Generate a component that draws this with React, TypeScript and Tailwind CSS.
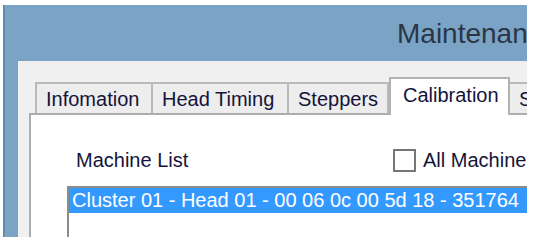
import React from "react";

const font = { fontFamily: '"Liberation Sans", Arial, sans-serif' };

function Tab({ label, w, selected }: { label: string; w: number; selected?: boolean }) {
  if (selected) {
    return (
      <div
        style={{ width: w }}
        className="relative z-10 -mb-[2px] h-[38px] shrink-0 border-2 border-b-0 border-[#b2b2b2] bg-white pl-[12px] pt-[4px] text-[20px] leading-[24px] text-[#14143a]"
      >
        {label}
      </div>
    );
  }
  return (
    <div
      style={{ width: w }}
      className="h-[31px] shrink-0 border-2 border-b-0 border-l-0 border-[#b9b9b9] bg-[#ededed] pl-[9px] pt-[3px] text-[20px] leading-[24px] text-[#14143a] first:border-l-2"
    >
      {label}
    </div>
  );
}

export default function App() {
  return (
    <div className="h-[246px] w-[534px] overflow-hidden bg-white pl-[3px] pt-[5px]" style={font}>
      <div className="flex h-[232px] w-[524px] flex-col overflow-hidden border-l-2 border-[#6489aa] bg-[#7ba3c5]">
        <div className="h-[56px] shrink-0 whitespace-nowrap pl-[392px] pt-[13px] text-[28px] leading-[32px] text-[#2a3646]">
          Maintenance
        </div>
        <div className="flex flex-1">
          <div className="w-[13px] shrink-0" />
          <div className="flex flex-1 flex-col bg-[#f0f0f0] pl-[11px] pt-[16px]">
            <div className="flex h-[36px] shrink-0 items-end pl-[6px]">
              <Tab label="Infomation" w={118} />
              <Tab label="Head Timing" w={136} />
              <Tab label="Steppers" w={100} />
              <Tab label="Calibration" w={121} selected />
              <Tab label="Settings" w={100} />
            </div>
            <div className="flex flex-1 flex-col border-l-2 border-t-2 border-[#adadad] bg-white">
              <div className="mt-[34px] flex h-[23px] items-center whitespace-nowrap pl-[45px] text-[20px] leading-[23px] text-[#14143a]">
                <span className="w-[317px] shrink-0">Machine List</span>
                <span className="h-[23px] w-[23px] shrink-0 border-2 border-[#767676] bg-white" />
                <span className="ml-[7px]">All Machines</span>
              </div>
              <div className="ml-[36px] mt-[14px] flex-1 border-l-2 border-t-2 border-[#8c8c8c] bg-white">
                <div className="h-[25px] whitespace-nowrap bg-[#3399ff] pl-[3px] text-[20px] leading-[25px] text-white">
                  Cluster 01 - Head 01 - 00 06 0c 00 5d 18 - 351764
                </div>
              </div>
            </div>
          </div>
        </div>
      </div>
    </div>
  );
}
